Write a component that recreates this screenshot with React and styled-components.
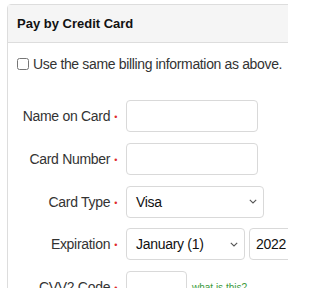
import styled, { createGlobalStyle } from "styled-components";

const GlobalStyle = createGlobalStyle`
  html, body {
    margin: 0;
    width: 288px;
    height: 288px;
    overflow: hidden;
    font-family: "Liberation Sans", Arial, sans-serif;
    color: #333;
    background: #fff;
  }
`;

const Page = styled.div`
  width: 288px;
  height: 288px;
  overflow: hidden;
  padding: 4px 0 0 7px;
  box-sizing: border-box;
`;

const Panel = styled.div`
  width: 420px;
  border: 1px solid #dddddd;
  border-radius: 4px 0 0 0;
`;

const Heading = styled.div`
  height: 37px;
  display: flex;
  align-items: center;
  padding: 0 9px;
  background: #f5f5f5;
  border-bottom: 1px solid #dddddd;
  font-size: 13px;
  font-weight: bold;
  color: #111;
`;

const Body = styled.div`
  padding: 13px 9px;
`;

const CheckRow = styled.label`
  display: flex;
  align-items: center;
  gap: 4px;
  font-size: 14px;
  letter-spacing: -0.35px;
  color: #333;
  margin-bottom: 28px;
`;

const Box = styled.input`
  width: 12px;
  height: 12px;
  margin: 0;
`;

const Form = styled.div`
  display: grid;
  grid-template-columns: 100px auto;
  column-gap: 9px;
  row-gap: 10.75px;
  align-items: center;
`;

const Label = styled.div`
  text-align: right;
  font-size: 14px;
  letter-spacing: -0.3px;
  color: #333;
  white-space: nowrap;
`;

const Req = styled.span`
  color: #e02b2b;
  font-size: 9px;
  margin-left: 4px;
  position: relative;
  top: -1px;
`;

const Field = styled.div`
  display: flex;
  align-items: center;
  gap: 4px;
`;

const Input = styled.input`
  box-sizing: border-box;
  width: ${(p) => p.$w}px;
  height: 32px;
  border: 1px solid #d9d9d9;
  border-radius: 4px;
  padding: 0 10px;
  font-family: inherit;
  font-size: 14px;
  outline: none;
`;

const SelectBox = styled.div`
  box-sizing: border-box;
  width: ${(p) => p.$w}px;
  height: 32px;
  border: 1px solid #d9d9d9;
  border-radius: 4px;
  padding: 0 6px 0 ${(p) => p.$pl}px;
  display: flex;
  align-items: center;
  justify-content: space-between;
  font-size: 14px;
  letter-spacing: -0.3px;
  color: #111;
  flex-shrink: 0;
`;

const Help = styled.a`
  font-size: 10px;
  color: #3a9a3a;
  text-decoration: none;
  margin: 1px 0 0 1px;
`;

const Chevron = () => (
  <svg width="8" height="5" viewBox="0 0 8 5">
    <path d="M0.8 0.8l3.2 3.2 3.2-3.2" fill="none" stroke="#555" strokeWidth="1.1" />
  </svg>
);

const Select = ({ w, value, pl = 9 }) => (
  <SelectBox $w={w} $pl={pl}>
    <span>{value}</span>
    <Chevron />
  </SelectBox>
);

const App = () => (
  <Page>
    <GlobalStyle />
    <Panel>
      <Heading>Pay by Credit Card</Heading>
      <Body>
        <CheckRow>
          <Box type="checkbox" />
          Use the same billing information as above.
        </CheckRow>
        <Form>
          <Label>
            Name on Card<Req>•</Req>
          </Label>
          <Field>
            <Input $w={132} />
          </Field>
          <Label>
            Card Number<Req>•</Req>
          </Label>
          <Field>
            <Input $w={132} />
          </Field>
          <Label>
            Card Type<Req>•</Req>
          </Label>
          <Field>
            <Select w={138} value="Visa" />
          </Field>
          <Label>
            Expiration<Req>•</Req>
          </Label>
          <Field>
            <Select w={119} value="January (1)" />
            <Select w={90} value="2022" pl={6} />
          </Field>
          <Label>
            CVV2 Code<Req>•</Req>
          </Label>
          <Field>
            <Input $w={61} />
            <Help href="#">what is this?</Help>
          </Field>
        </Form>
      </Body>
    </Panel>
  </Page>
);

export default App;
